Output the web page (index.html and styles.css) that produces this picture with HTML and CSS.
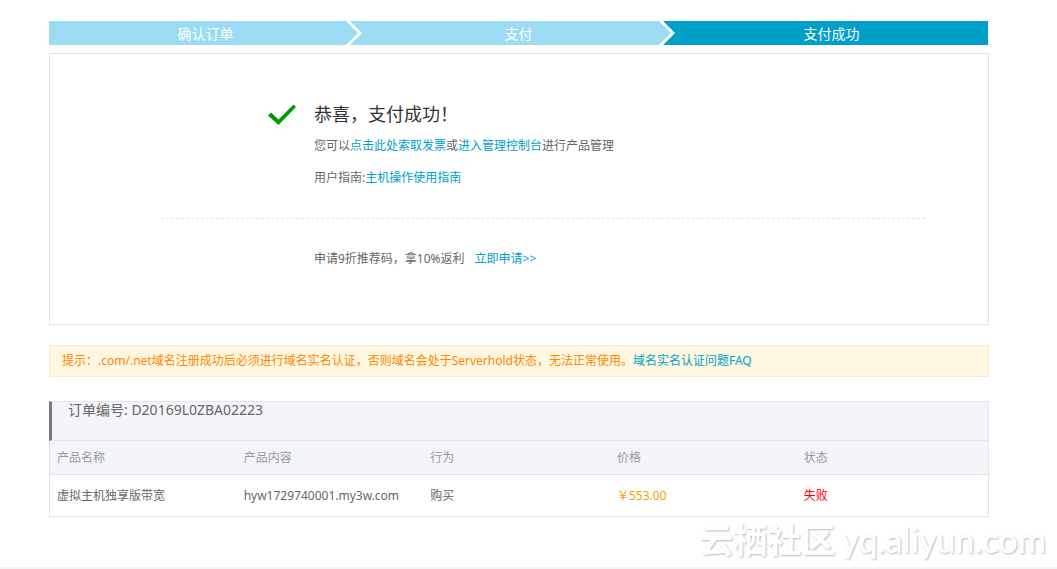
FILE: index.html
```html
<!DOCTYPE html>
<html lang="zh-CN">
<head>
<meta charset="utf-8">
<title>支付成功</title>
<link rel="stylesheet" href="styles.css">
</head>
<body>
<main class="page">
  <ol class="steps">
    <li class="step">确认订单
      <svg class="step-arrow" viewBox="0 0 16 24" aria-hidden="true"><path class="arrow-line" d="M0 0H4L16 12L4 24H0L12 12Z"/></svg>
    </li>
    <li class="step">支付
      <svg class="step-arrow" viewBox="0 0 16 24" aria-hidden="true"><path class="arrow-next" d="M4 0H16V24H4L12 12Z"/><path class="arrow-line" d="M0 0H4L16 12L4 24H0L12 12Z"/></svg>
    </li>
    <li class="step step-current" aria-current="step">支付成功</li>
  </ol>

  <section class="result">
    <div class="result-body">
      <svg class="check" viewBox="0 0 28 22" aria-hidden="true"><path d="M0 11.500L3 8.500L10.500 15.500L25.500 0.500L28 3L10.500 21Z"/></svg>
      <div>
        <h1 class="result-title">恭喜，支付成功！</h1>
        <p class="result-line">您可以<a href="#invoice">点击此处索取发票</a>或<a href="#console">进入管理控制台</a>进行产品管理</p>
        <p class="result-line">用户指南:<a href="#guide">主机操作使用指南</a></p>
      </div>
    </div>
    <div class="promo">申请9折推荐码，拿10%返利<a class="promo-link" href="#apply">立即申请&gt;&gt;</a></div>
  </section>

  <p class="notice">提示：.com/.net域名注册成功后必须进行域名实名认证，否则域名会处于Serverhold状态，无法正常使用。<a href="#faq">域名实名认证问题FAQ</a></p>

  <section class="order">
    <h2 class="order-title">订单编号: D20169L0ZBA02223</h2>
    <table class="order-table">
      <thead>
        <tr><th>产品名称</th><th>产品内容</th><th>行为</th><th>价格</th><th>状态</th></tr>
      </thead>
      <tbody>
        <tr><td>虚拟主机独享版带宽</td><td>hyw1729740001.my3w.com</td><td>购买</td><td class="price">￥553.00</td><td class="failed">失败</td></tr>
      </tbody>
    </table>
  </section>
</main>
<footer class="footer"></footer>
<div class="watermark"><span class="watermark-name">云栖社区</span><span>yq.aliyun.com</span></div>
</body>
</html>
```
FILE: styles.css
```css
* {
  box-sizing: border-box;
}

body {
  margin: 0;
  background: #fff;
  color: #666;
  font: 12px/18px "Noto Sans", "Noto Sans CJK SC", sans-serif;
}

a {
  color: #00a0c8;
  text-decoration: none;
}

.page {
  padding: 21px 68px 50px 49px;
}

.steps {
  display: flex;
  height: 24px;
  margin: 0 1px 8px 0;
  padding: 0;
  list-style: none;
}

.step {
  position: relative;
  flex: 1;
  background: #9bdcf4;
  color: #fff;
  font-size: 14px;
  line-height: 26px;
  text-align: center;
}

.step-current {
  background: #00a0c8;
}

.step-arrow {
  position: absolute;
  top: 0;
  right: 0;
  width: 16px;
  height: 24px;
}

.arrow-line {
  fill: #fff;
}

.arrow-next {
  fill: #00a0c8;
}

.result {
  padding: 47px 63px 56px 111px;
  border: 1px solid #e1e3e6;
}

.result-body {
  display: flex;
  gap: 18px;
  padding: 0 0 31px 107px;
  border-bottom: 1px dashed #e1e3e6;
}

.check {
  flex: none;
  width: 28px;
  height: 22px;
  margin-top: 3px;
  fill: #090;
}

.result-title {
  margin: 0 0 10px;
  color: #333;
  font-size: 18px;
  font-weight: 400;
  line-height: 26px;
}

.result-line {
  margin: 0 0 14px;
}

.result-line:last-child {
  margin-bottom: 0;
}

.promo {
  padding: 31px 0 0 153px;
}

.promo-link {
  margin-left: 10px;
}

.notice {
  margin: 20px 0 24px;
  padding: 6px 12px;
  border: 1px solid #faebcc;
  background: #fdf7e2;
  color: #f80;
}

.order-title {
  height: 40px;
  margin: 0;
  padding-left: 16px;
  border: 1px solid #e1e6eb;
  border-left: 3px solid #778;
  background: #f4f5f9;
  font-size: 14px;
  font-weight: 400;
  line-height: 16px;
}

.order-table {
  width: 100%;
  border: 1px solid #e1e3e6;
  border-top: 0;
  border-spacing: 0;
  table-layout: fixed;
}

.order-table th,
.order-table td {
  padding: 8px 7px;
  font-weight: 400;
  text-align: left;
}

.order-table th {
  padding-bottom: 7px;
  border-bottom: 1px solid #e1e3e6;
  background: #f4f5f9;
  color: #999;
}

.order-table th:not(:last-child) {
  width: 19.9%;
}

.order-table td {
  padding-top: 12px;
  padding-bottom: 11px;
}

.order-table .price {
  color: #f90;
}

.order-table .failed {
  color: #f00;
}

.footer {
  height: 2px;
  background: #f4f4f4;
}

.watermark {
  position: absolute;
  right: 11px;
  bottom: 8px;
  display: flex;
  align-items: baseline;
  gap: 6px;
  color: #fff;
  font: 34px/42px Lato, "Noto Sans CJK SC", sans-serif;
  font-weight: 500;
  text-shadow: 1px 1px 2px #bbb;
}

.watermark-name {
  font-weight: 700;
}
```
